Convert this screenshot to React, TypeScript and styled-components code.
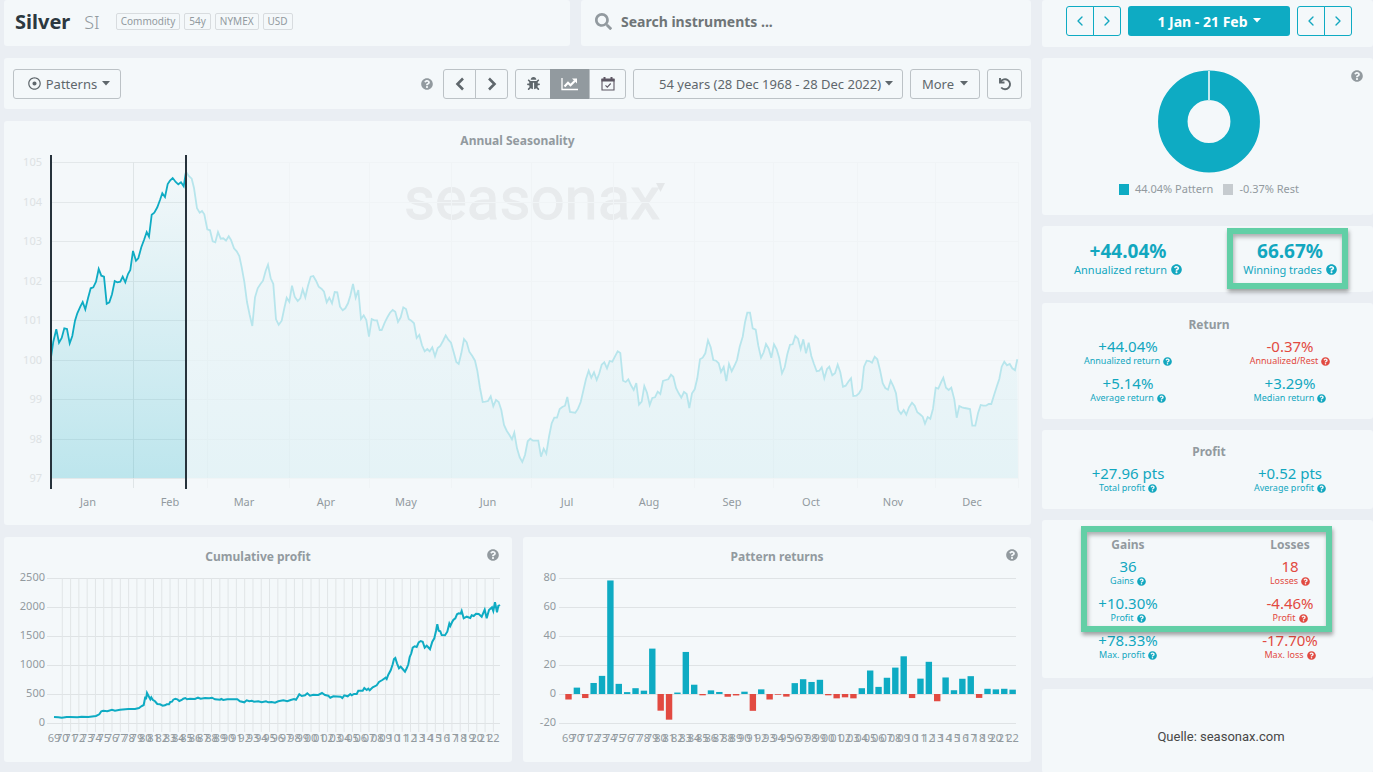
import React from "react";
import styled, { createGlobalStyle } from "styled-components";
import { ChevronLeft, ChevronRight } from "lucide-react";
import { FaBug, FaQuestionCircle, FaRegDotCircle, FaSearch } from "react-icons/fa";

const color = {
  page: "#eaeef3",
  card: "#f4f8fa",
  teal: "#0eabc3",
  tealText: "#12a7bf",
  red: "#e24a41",
  ink: "#2c3840",
  grey: "#929a9f",
  button: "#5f676c",
  line: "#bcc2c6",
  mark: "#62cfa6",
};

const Global = createGlobalStyle`
  *, *::before, *::after { box-sizing: border-box; }
  body {
    margin: 0;
    background: ${color.page};
    font-family: "Noto Sans", "Open Sans", sans-serif;
    font-size: 12px;
    color: ${color.grey};
  }
  h1, h2, p { margin: 0; }
  button, input, select { font: inherit; color: inherit; }
`;

const Page = styled.div`
  display: grid;
  grid-template-columns: minmax(0, 1fr) 331px;
  gap: 11px;
  min-height: 100vh;
  padding-left: 4px;
`;

const Main = styled.main`
  display: flex;
  flex-direction: column;
  gap: 12px;
  min-width: 0;
  padding-bottom: 11px;
`;

const Sidebar = styled.aside`
  display: flex;
  flex-direction: column;
  gap: 11px;
`;

const Card = styled.section`
  background: ${color.card};
  border-radius: 3px;
`;

const HeaderRow = styled.div`
  display: grid;
  grid-template-columns: minmax(0, 566fr) minmax(0, 450fr);
  gap: 11px;
`;

const InstrumentCard = styled(Card)`
  display: flex;
  align-items: center;
  height: 46px;
  padding: 0 11px 3px;
`;

const InstrumentName = styled.h1`
  font-size: 20px;
  line-height: 28px;
  font-weight: 700;
  color: ${color.ink};
`;

const Ticker = styled.span`
  margin: 0 16px 0 14px;
  font-size: 18px;
  font-weight: 300;
`;

const Tags = styled.div`
  display: flex;
  gap: 4px;
`;

const Tag = styled.span`
  height: 17px;
  padding: 0 4px;
  border: 1px solid #d8dcdf;
  border-radius: 2px;
  font-size: 10px;
  line-height: 14px;
`;

const SearchCard = styled(Card)`
  display: flex;
  align-items: center;
  gap: 9px;
  height: 46px;
  padding: 0 14px 3px;
`;

const SearchInput = styled.input`
  flex: 1;
  min-width: 0;
  padding: 0;
  border: 0;
  outline: 0;
  background: transparent;
  font-size: 14px;
  font-weight: 700;
  color: #6f7577;
  &::placeholder {
    color: #6f7577;
    opacity: 1;
  }
`;

const Toolbar = styled(Card)`
  display: flex;
  align-items: center;
  gap: 7px;
  height: 51px;
  padding: 0 9px;
`;

const Spacer = styled.div`
  flex: 1;
`;

const HelpButton = styled.button`
  display: flex;
  padding: 0;
  border: 0;
  background: none;
  color: ${color.grey};
  font-size: 12px;
`;

const ToolButton = styled.button<{ $width: number; $gap?: number; $inset?: number }>`
  display: flex;
  align-items: center;
  justify-content: center;
  gap: ${(p) => p.$gap ?? 0}px;
  width: ${(p) => p.$width}px;
  height: 30px;
  padding: 0 0 0 ${(p) => p.$inset ?? 0}px;
  border: 1px solid ${color.line};
  border-radius: 3px;
  background: transparent;
  color: ${color.button};
  font-size: 13px;
`;

const ButtonGroup = styled.div<{ $push?: boolean }>`
  display: flex;
  margin-left: ${(p) => (p.$push ? 3 : 0)}px;
`;

const GroupButton = styled.button<{ $width: number; $active?: boolean }>`
  display: flex;
  align-items: center;
  justify-content: center;
  width: ${(p) => p.$width}px;
  height: 30px;
  padding: 0;
  border: 1px solid ${(p) => (p.$active ? color.grey : color.line)};
  background: ${(p) => (p.$active ? color.grey : "transparent")};
  color: ${(p) => (p.$active ? "#fff" : color.button)};
  font-size: 13px;
  & + & {
    margin-left: -1px;
  }
  &:first-child {
    border-radius: 3px 0 0 3px;
  }
  &:last-child {
    border-radius: 0 3px 3px 0;
  }
`;

const RangeField = styled.label`
  position: relative;
  display: flex;
  width: 270px;
  color: ${color.button};
`;

const RangeSelect = styled.select`
  appearance: none;
  width: 100%;
  height: 30px;
  padding: 0 12px 0 25px;
  border: 1px solid ${color.line};
  border-radius: 3px;
  background: transparent;
  font-size: 13px;
`;

const CaretIcon = styled.svg`
  width: 8px;
  height: 6px;
  fill: currentColor;
`;

const RangeCaret = styled(CaretIcon)`
  position: absolute;
  right: 10px;
  top: 12px;
  pointer-events: none;
`;

const ChartHead = styled.div<{ $height: number }>`
  position: relative;
  height: ${(p) => p.$height}px;
  padding-top: 11px;
  text-align: center;
`;

const ChartTitle = styled.h2`
  font-size: 12px;
  line-height: 18px;
  font-weight: 700;
  color: ${color.grey};
`;

const CornerHelp = styled(HelpButton)<{ $right: number }>`
  position: absolute;
  right: ${(p) => p.$right}px;
  top: 12px;
`;

const Chart = styled.svg`
  display: block;
  width: 100%;
  height: auto;
  overflow: visible;
  font-family: "Noto Sans", "Open Sans", sans-serif;
  font-size: 11px;
  fill: ${color.grey};
`;

const ChartRow = styled.div`
  display: grid;
  grid-template-columns: minmax(0, 1fr) minmax(0, 1fr);
  gap: 11px;
`;

const DateCard = styled(Card)`
  display: flex;
  justify-content: center;
  gap: 7px;
  height: 47px;
  padding: 6px 0 0 3px;
`;

const StepButton = styled.button`
  display: flex;
  align-items: center;
  justify-content: center;
  width: 28px;
  height: 30px;
  padding: 0;
  border: 1px solid ${color.teal};
  background: transparent;
  color: ${color.tealText};
  & + & {
    margin-left: -1px;
  }
  &:first-child {
    border-radius: 3px 0 0 3px;
  }
  &:last-child {
    border-radius: 0 3px 3px 0;
  }
`;

const DateButton = styled.button`
  display: flex;
  align-items: center;
  justify-content: center;
  gap: 5px;
  width: 162px;
  height: 30px;
  padding: 0;
  border: 0;
  border-radius: 3px;
  background: ${color.teal};
  color: #fff;
  font-size: 14px;
  font-weight: 700;
`;

const DonutCard = styled(Card)`
  position: relative;
  display: flex;
  flex-direction: column;
  align-items: center;
  gap: 7px;
  height: 157px;
  padding: 12px 0 0 3px;
`;

const Legend = styled.div`
  display: flex;
  gap: 10px;
  font-size: 11px;
  line-height: 16px;
`;

const LegendItem = styled.span<{ $swatch: string }>`
  display: flex;
  align-items: center;
  gap: 6px;
  &::before {
    content: "";
    width: 10px;
    height: 11px;
    background: ${(p) => p.$swatch};
  }
`;

const StatCard = styled(Card)<{ $height: number; $top: number }>`
  position: relative;
  min-height: ${(p) => p.$height}px;
  padding: ${(p) => p.$top}px 2px 0 5px;
`;

const StatTitle = styled.h2`
  margin-bottom: 4px;
  font-size: 12px;
  line-height: 18px;
  font-weight: 700;
  text-align: center;
`;

const StatGrid = styled.div`
  display: grid;
  grid-template-columns: 1fr 1fr;
  row-gap: 8px;
`;

const StatBox = styled.div<{ $tone: string }>`
  display: flex;
  flex-direction: column;
  align-items: center;
  color: ${(p) => p.$tone};
`;

const StatValue = styled.span<{ $large?: boolean }>`
  font-size: ${(p) => (p.$large ? 19 : 15)}px;
  line-height: ${(p) => (p.$large ? 18 : 17)}px;
  font-weight: ${(p) => (p.$large ? 700 : 400)};
`;

const StatLabel = styled.span<{ $large?: boolean }>`
  display: flex;
  align-items: center;
  gap: ${(p) => (p.$large ? 4 : 3)}px;
  font-size: ${(p) => (p.$large ? 11 : 9)}px;
  line-height: ${(p) => (p.$large ? 19 : 12)}px;
`;

const Mark = styled.div<{ $left: number; $top: number; $width: number; $height: number }>`
  position: absolute;
  z-index: 1;
  left: ${(p) => p.$left}px;
  top: ${(p) => p.$top}px;
  width: ${(p) => p.$width}px;
  height: ${(p) => p.$height}px;
  border: 6px solid ${color.mark};
  box-shadow: 1px 3px 4px rgba(0, 0, 0, 0.35), inset 1px 3px 4px rgba(0, 0, 0, 0.3);
  pointer-events: none;
`;

const SourceCard = styled(Card)`
  flex: 1;
  min-height: 83px;
  padding: 38px 0 0 27px;
  text-align: center;
  font-family: Roboto, sans-serif;
  font-size: 13px;
  line-height: 20px;
  color: #474747;
`;

const seasonBlocks: [number, string][] = [
  [
    0,
    "153,712 160,665 169,628 177,668 185,654 193,625 201,627 209,670 217,648 225,602 232,580 241,560 248,546 256,568 264,535 272,505 280,502 288,485 296,447 304,467 312,470 320,551 328,547 336,523 344,483 352,487 361,485 368,470 376,487 384,462 391,450 399,393 408,422 415,415 424,382 432,360 440,336 447,350 455,284 463,278 472,262 480,240 487,220 495,231 503,192 510,182 518,174 527,186 535,193 543,187 551,199 558,155",
  ],
  [
    0,
    "558,155 566,168 575,176 582,204 591,265 599,278 606,273 613,283 622,328 630,331 638,364 646,367 654,336 662,356 670,355 678,362 686,349 693,360 702,385 710,394 718,408 725,442 733,485 741,546 749,585 757,618 765,532 773,505 781,493 789,482 797,452 804,434 812,475 820,492 828,598 836,614 845,602 853,565 860,533 868,545 876,497 884,530 893,543 901,535 908,508 916,532 924,497 932,470 940,468 948,482 956,500 965,507 972,515 980,547 988,533 996,550 1004,516 1012,517 1020,560",
  ],
  [
    1020,
    "8,571 16,565 24,550 31,527 39,492 47,533 55,510 63,597 71,586 79,600 87,650 95,597 103,601 111,601 119,630 125,630 134,608 143,590 150,578 158,570 166,575 174,606 182,592 190,562 198,567 206,597 214,602 222,610 230,654 238,645 246,676 254,694 262,687 269,694 277,682 285,709 293,684 301,678 309,663 317,646 325,659 333,668 341,697 349,726 356,732 364,700 372,657 380,667 388,695 397,708 405,722 412,752 420,804 428,846 436,845 444,843 452,829 460,859 468,840 476,846 484,870 492,915 500,932 508,944 516,958 523,938 531,985 539,1012 547,1026 555,1005 563,964 571,956 579,962 595,962 603,1010 611,986 619,1001 627,950 635,910 643,893 651,893 659,867 667,861 675,857 682,831 690,876 698,877 706,878 714,866 722,846 730,812 738,777 746,752 754,773 762,757 770,780 778,760 785,734 793,727 801,745 809,723 817,725 825,709 833,694 841,699 849,782 857,786 865,778 873,796 881,810 889,789 897,854 905,845 913,798 921,818 929,855 937,834 945,832 953,815 961,822 969,783 977,780 985,778 993,764 1000,770 1008,804 1016,820",
  ],
  [
    2040,
    "4,833 12,816 20,822 28,864 36,820 44,808 52,775 60,718 68,713 76,700 84,661 92,682 100,720 108,722 116,730 123,756 131,741 139,783 147,732 155,754 163,738 171,720 179,680 188,650 195,607 202,578 210,578 218,625 227,629 235,677 243,713 251,697 258,672 266,686 274,713 282,673 290,688 298,715 306,760 314,742 322,703 330,674 338,673 346,648 354,656 362,687 370,658 378,700 386,668 394,708 402,732 410,754 418,752 425,742 433,775 441,747 448,740 457,766 465,760 473,734 481,757 489,800 497,797 505,785 513,775 520,828 529,827 537,820 545,806 552,740 560,722 568,723 576,728 584,710 592,718 600,750 608,790 616,804 624,809 632,782 640,798 648,820 655,870 663,882 671,870 679,884 687,862 696,848 704,857 712,877 720,883 728,890 735,911 743,891 751,896 759,866 767,803 775,806 783,787 790,773 798,803 806,810 814,803 823,838 830,893 838,858 846,862 854,864 870,867 877,917 886,917 894,880 902,855 910,857 918,857 926,852 934,852 942,826 950,800 958,777 965,740 973,725 981,736 989,732 997,745 1005,751 1012,718",
  ],
];

const toPoints = (text: string, dx: number, x0: number, y0: number) =>
  text
    .split(" ")
    .map((pair) => {
      const [x, y] = pair.split(",").map(Number);
      return `${((x + dx) / 3 + x0).toFixed(1)},${(y / 3 + y0).toFixed(1)}`;
    })
    .join(" ");

const patternLine = toPoints(seasonBlocks[0][1], 0, -4, -36);
const restLine = seasonBlocks
  .slice(1)
  .map(([dx, text]) => toPoints(text, dx, -4, -36))
  .join(" ");

const months: [string, number][] = [
  ["Jan", 84], ["Feb", 166], ["Mar", 240], ["Apr", 322], ["May", 402], ["Jun", 484],
  ["Jul", 563], ["Aug", 645], ["Sep", 728], ["Oct", 807], ["Nov", 889], ["Dec", 968],
];
const monthStarts = [203, 285, 365, 447, 527, 609, 690, 769, 853, 931, 1014];

function SeasonalityChart() {
  return (
    <Chart viewBox="0 0 1027 369" role="img" aria-label="Annual seasonality">
      <defs>
        <linearGradient id="season" x1="0" y1="6" x2="0" y2="322" gradientUnits="userSpaceOnUse">
          <stop offset="0" stopColor={color.teal} stopOpacity="0" />
          <stop offset="1" stopColor={color.teal} stopOpacity="0.24" />
        </linearGradient>
      </defs>
      <text
        x="400"
        y="63"
        fontSize="60"
        fontFamily="Roboto, sans-serif"
        fill="#e8ebed"
        stroke="#e8ebed"
        strokeWidth="1"
      >
        seasonax
      </text>
      <path d="M652 27h9l-4.500 9z" fill="#e4e7e9" />
      {[105, 104, 103, 102, 101, 100, 99, 98, 97].map((v, i) => {
        const y = Math.round(6 + i * 39.5) + 0.5;
        return (
          <React.Fragment key={v}>
            <path d={`M47 ${y}H182`} stroke="#e3e8ea" />
            <path d={`M182 ${y}H1014`} stroke="#f0f4f6" />
            <text x="38" y={y + 3} textAnchor="end" fill="#dde2e4">{v}</text>
          </React.Fragment>
        );
      })}
      <path d="M129.5 6V332" stroke="#dfe5e7" />
      {monthStarts.map((x) => (
        <path key={x} d={`M${x + 0.5} 6V332`} stroke="#f0f4f6" />
      ))}
      <polygon points={`47,322 ${patternLine} 182,322`} fill="url(#season)" />
      <polygon points={`182,322 ${restLine} 1014,322`} fill="url(#season)" opacity="0.28" />
      <polyline points={restLine} fill="none" stroke="#b7e5ec" strokeWidth="1.8" />
      <polyline points={patternLine} fill="none" stroke={color.teal} strokeWidth="1.8" />
      <path d="M47 -1V333M182 -1V333" stroke="#26323b" strokeWidth="2" />
      {months.map(([name, x]) => (
        <text key={name} x={x} y="350" textAnchor="middle">{name}</text>
      ))}
    </Chart>
  );
}

const years = Array.from({ length: 54 }, (_, i) => String((69 + i) % 100).padStart(2, "0"));

const profitLine = toPoints(
  "162,576 175,577 185,578 200,576 210,576 232,577 245,575 265,576 288,573 298,568 304,559 310,557 322,559 336,554 345,557 360,554 385,552 405,552 417,549 424,544 431,540 436,515 438,523 441,504 446,514 451,523 454,517 458,524 465,529 472,537 480,538 488,542 495,541 500,538 507,538 511,531 516,530 520,524 526,521 532,523 538,528 545,525 550,521 556,519 561,523 570,521 585,522 594,518 602,521 615,519 628,520 636,518 645,523 660,524 664,522 670,525 682,523 712,523 720,529 733,532 740,526 748,529 755,527 762,530 775,529 785,532 798,529 805,532 815,531 825,533 835,529 850,526 862,529 872,525 882,522 888,524 893,516 898,508 905,513 915,511 922,505 930,512 940,509 955,510 966,504 975,510 985,512 991,518 1000,514 1022,515 1027,519 1033,511 1043,514 1051,507 1055,511 1062,507 1070,507 1075,497 1088,497 1093,489 1100,495 1105,491 1109,496 1118,487 1130,481 1137,471 1147,465 1157,458 1160,462 1165,449 1172,436 1178,418 1182,402 1186,399 1191,415 1197,430 1202,425 1208,432 1215,440 1220,430 1225,418 1229,396 1234,385 1238,368 1244,364 1250,366 1256,352 1262,348 1268,350 1274,368 1280,362 1284,366 1290,373 1297,350 1303,340 1308,318 1312,298 1316,317 1321,319 1325,330 1335,331 1342,320 1348,296 1351,303 1356,292 1360,285 1366,280 1371,268 1376,265 1382,266 1385,258 1391,280 1400,275 1411,279 1415,271 1421,273 1428,266 1436,267 1445,275 1454,254 1460,280 1467,255 1476,247 1480,258 1485,232 1491,262 1495,243 1500,240",
  0,
  -4,
  -45,
);

function ProfitChart() {
  return (
    <Chart viewBox="0 0 508 192" role="img" aria-label="Cumulative profit">
      {[2500, 2000, 1500, 1000, 500, 0].map((v, i) => (
        <React.Fragment key={v}>
          <path d={`M43 ${8.5 + i * 29}H496`} stroke="#dfe3e5" />
          <text x="41" y={11 + i * 29} textAnchor="end">{v}</text>
        </React.Fragment>
      ))}
      {years.map((year, i) => {
        const x = 50 + i * 8.29;
        return (
          <React.Fragment key={year}>
            {i > 0 && <path d={`M${x} 8V162`} stroke="#e1e5e7" />}
            <text x={x} y="172" textAnchor="middle">{year}</text>
          </React.Fragment>
        );
      })}
      <polyline points={profitLine} fill="none" stroke={color.teal} strokeWidth="2" />
    </Chart>
  );
}

const returns = [
  -3.8, 4.4, -2.8, 7.6, 12.5, 78.3, 7, 1.3, 4, 2.3, 31.3, -11.5, -17.7, 1, 29, 6.4, -0.9, 2.5,
  1.4, -1.9, -1, 1.6, -11.6, 3.2, -3.8, -0.5, -1.8, 7.5, 10.2, 8.3, 9.8, -0.9, -3, -2.3, -3, 4,
  16.2, 4.9, 11.2, 18.2, 26, -2.8, 10.6, 22.2, -5, 11.4, 2.6, 10.5, 12.3, -2.7, 3.6, 3.2, 3.6, 3,
];

function ReturnsChart() {
  return (
    <Chart viewBox="0 0 508 192" role="img" aria-label="Pattern returns">
      {[80, 60, 40, 20, 0, -20].map((v, i) => (
        <React.Fragment key={v}>
          <path d={`M36 ${8.5 + i * 29}H493`} stroke="#dfe3e5" />
          <text x="33" y={11 + i * 29} textAnchor="end">{v}</text>
        </React.Fragment>
      ))}
      {returns.map((v, i) => {
        const x = 45.3 + i * 8.38;
        const h = Math.abs(v) * 1.45;
        return (
          <React.Fragment key={years[i]}>
            <rect x={x - 3} y={v > 0 ? 124 - h : 124} width="6.4" height={h} fill={v > 0 ? color.teal : color.red} />
            <text x={x} y="172" textAnchor="middle">{years[i]}</text>
          </React.Fragment>
        );
      })}
    </Chart>
  );
}

function Caret({ as: Icon = CaretIcon }: { as?: typeof CaretIcon }) {
  return (
    <Icon viewBox="0 0 8 6" aria-hidden>
      <path d="M0 0h8L4 4.500z" />
    </Icon>
  );
}

function Chevron({ next }: { next?: boolean }) {
  return (
    <svg width="12" height="14" viewBox="0 0 12 14" fill="none" stroke="currentColor" strokeWidth="2.600">
      <path d={next ? "M3 1.500L8.500 7L3 12.500" : "M9 1.500L3.500 7L9 12.500"} />
    </svg>
  );
}

function LineChartIcon() {
  return (
    <svg width="18" height="14" viewBox="0 0 18 14" fill="none" stroke="currentColor">
      <path d="M1 1v11.500h16" strokeWidth="1.300" />
      <path d="M3.500 9.500L7 5.800l2.500 2.500L14 3.800" strokeWidth="2.200" />
      <path d="M11 1.500h5v5z" fill="currentColor" stroke="none" />
    </svg>
  );
}

function CalendarIcon() {
  return (
    <svg width="14" height="15" viewBox="0 0 14 15" fill="none" stroke="#5d5663" strokeWidth="1.100">
      <path d="M1 3h12v11H1z" />
      <path d="M1 3.500h12v1.500H1z" fill="#5d5663" />
      <path d="M3.500 1v3M10.500 1v3" strokeWidth="2" />
      <path d="M4.500 9.300l1.800 1.800 3.400-3.600" />
    </svg>
  );
}

function ResetIcon() {
  return (
    <svg width="14" height="14" viewBox="0 0 14 14" fill="none" stroke="currentColor" strokeWidth="1.900">
      <path d="M2 1v4.500h4.500" />
      <path d="M2.600 5A5 5 0 1 1 3.200 10.500" />
    </svg>
  );
}

interface StatProps {
  value: string;
  label: string;
  loss?: boolean;
  large?: boolean;
}

function Stat({ value, label, loss, large }: StatProps) {
  return (
    <StatBox $tone={loss ? color.red : color.tealText}>
      <StatValue $large={large}>{value}</StatValue>
      <StatLabel $large={large}>
        {label} <FaQuestionCircle />
      </StatLabel>
    </StatBox>
  );
}

function Steps() {
  return (
    <ButtonGroup>
      <StepButton aria-label="Earlier"><ChevronLeft size={16} strokeWidth={2} /></StepButton>
      <StepButton aria-label="Later"><ChevronRight size={16} strokeWidth={2} /></StepButton>
    </ButtonGroup>
  );
}

export default function App() {
  return (
    <>
      <Global />
      <Page>
        <Main>
          <HeaderRow>
            <InstrumentCard>
              <InstrumentName>Silver</InstrumentName>
              <Ticker>SI</Ticker>
              <Tags>
                <Tag>Commodity</Tag>
                <Tag>54y</Tag>
                <Tag>NYMEX</Tag>
                <Tag>USD</Tag>
              </Tags>
            </InstrumentCard>
            <SearchCard>
              <FaSearch size={17} />
              <SearchInput aria-label="Search instruments" placeholder="Search instruments ..." />
            </SearchCard>
          </HeaderRow>

          <Toolbar>
            <ToolButton $width={108} $gap={5} $inset={4} aria-haspopup="menu">
              <FaRegDotCircle />
              Patterns
              <Caret />
            </ToolButton>
            <Spacer />
            <HelpButton aria-label="Help"><FaQuestionCircle /></HelpButton>
            <ButtonGroup $push>
              <GroupButton $width={33} aria-label="Previous"><Chevron /></GroupButton>
              <GroupButton $width={33} aria-label="Next"><Chevron next /></GroupButton>
            </ButtonGroup>
            <ButtonGroup>
              <GroupButton $width={36} aria-label="Debug"><FaBug /></GroupButton>
              <GroupButton $width={40} $active aria-label="Line chart"><LineChartIcon /></GroupButton>
              <GroupButton $width={37} aria-label="Calendar"><CalendarIcon /></GroupButton>
            </ButtonGroup>
            <RangeField>
              <RangeSelect aria-label="Years">
                <option>54 years (28 Dec 1968 - 28 Dec 2022)</option>
              </RangeSelect>
              <Caret as={RangeCaret} />
            </RangeField>
            <ToolButton $width={70} $gap={6} aria-haspopup="menu">
              More
              <Caret />
            </ToolButton>
            <ToolButton $width={35} aria-label="Reset"><ResetIcon /></ToolButton>
          </Toolbar>

          <Card>
            <ChartHead $height={35}>
              <ChartTitle>Annual Seasonality</ChartTitle>
            </ChartHead>
            <SeasonalityChart />
          </Card>

          <ChartRow>
            <Card>
              <ChartHead $height={33}>
                <ChartTitle>Cumulative profit</ChartTitle>
                <CornerHelp $right={13} aria-label="Help"><FaQuestionCircle /></CornerHelp>
              </ChartHead>
              <ProfitChart />
            </Card>
            <Card>
              <ChartHead $height={33}>
                <ChartTitle>Pattern returns</ChartTitle>
                <CornerHelp $right={13} aria-label="Help"><FaQuestionCircle /></CornerHelp>
              </ChartHead>
              <ReturnsChart />
            </Card>
          </ChartRow>
        </Main>

        <Sidebar>
          <DateCard>
            <Steps />
            <DateButton aria-haspopup="menu">
              1 Jan - 21 Feb
              <Caret />
            </DateButton>
            <Steps />
          </DateCard>

          <DonutCard>
            <CornerHelp $right={10} aria-label="Help"><FaQuestionCircle /></CornerHelp>
            <svg width="104" height="104" viewBox="0 0 104 104" role="img" aria-label="Pattern share">
              <circle cx="52" cy="51.500" r="36.200" fill="none" stroke={color.teal} strokeWidth="29.500" />
              <path d="M52 1V31" stroke="#c3e9ef" strokeWidth="2" />
            </svg>
            <Legend>
              <LegendItem $swatch={color.teal}>44.04% Pattern</LegendItem>
              <LegendItem $swatch="#c6cbcf">-0.37% Rest</LegendItem>
            </Legend>
          </DonutCard>

          <StatCard $height={66} $top={16}>
            <StatGrid>
              <Stat large value="+44.04%" label="Annualized return" />
              <Stat large value="66.67%" label="Winning trades" />
            </StatGrid>
            <Mark $left={185} $top={2} $width={121} $height={61} />
          </StatCard>

          <StatCard $height={116} $top={13}>
            <StatTitle>Return</StatTitle>
            <StatGrid>
              <Stat value="+44.04%" label="Annualized return" />
              <Stat loss value="-0.37%" label="Annualized/Rest" />
              <Stat value="+5.14%" label="Average return" />
              <Stat value="+3.29%" label="Median return" />
            </StatGrid>
          </StatCard>

          <StatCard $height={79} $top={13}>
            <StatTitle>Profit</StatTitle>
            <StatGrid>
              <Stat value="+27.96 pts" label="Total profit" />
              <Stat value="+0.52 pts" label="Average profit" />
            </StatGrid>
          </StatCard>

          <StatCard $height={158} $top={16}>
            <StatGrid>
              <StatTitle>Gains</StatTitle>
              <StatTitle>Losses</StatTitle>
            </StatGrid>
            <StatGrid>
              <Stat value="36" label="Gains" />
              <Stat loss value="18" label="Losses" />
              <Stat value="+10.30%" label="Profit" />
              <Stat loss value="-4.46%" label="Profit" />
              <Stat value="+78.33%" label="Max. profit" />
              <Stat loss value="-17.70%" label="Max. loss" />
            </StatGrid>
            <Mark $left={39} $top={6} $width={251} $height={106} />
          </StatCard>

          <SourceCard as="footer">Quelle: seasonax.com</SourceCard>
        </Sidebar>
      </Page>
    </>
  );
}
